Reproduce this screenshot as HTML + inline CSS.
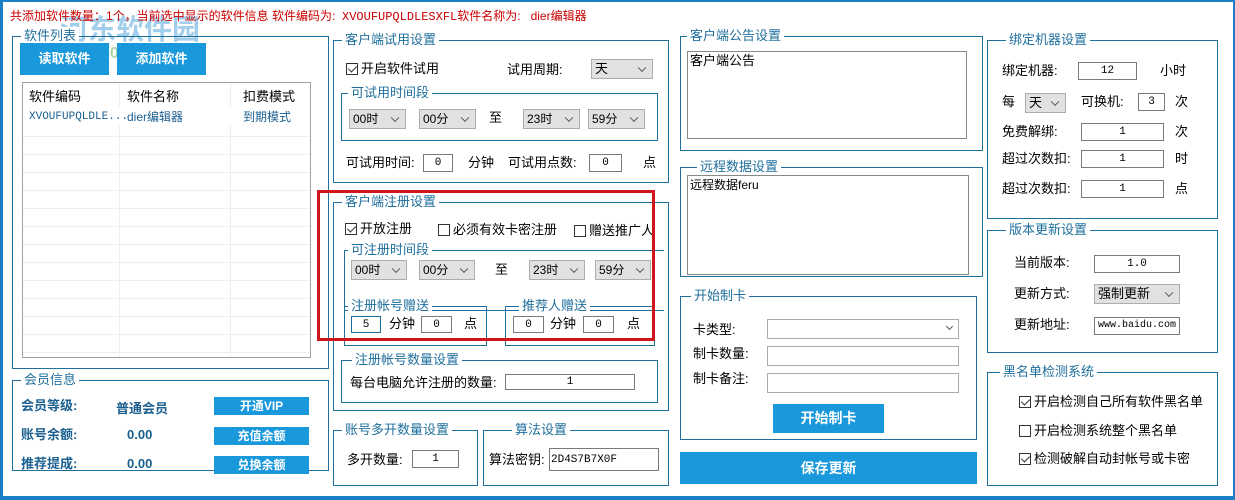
<!DOCTYPE html>
<html><head><meta charset="utf-8"><style>
*{box-sizing:border-box;margin:0;padding:0}
body{width:1235px;height:500px;background:#fff;position:relative;overflow:hidden;font-family:"Liberation Sans","Noto Sans CJK SC",sans-serif;font-size:12px;color:#000}
.frame{position:absolute;left:0;top:0;width:1235px;height:500px;border:2px solid #1a7fc4;border-left-width:3px;border-bottom-width:4px}
.a{position:absolute;white-space:nowrap;line-height:16px}
.g{position:absolute;border:1px solid #1f6f9c}
.lg{position:absolute;top:-10px;background:#fff;color:#1f6f9c;padding:0 3px;font-size:13px;line-height:18px;white-space:nowrap}
.in{position:absolute;border:1px solid #7a7a7a;background:#fff;display:flex;align-items:center;justify-content:center;font-family:"Liberation Mono","Noto Sans CJK SC",monospace;font-size:11px;line-height:12px!important}
.sel{position:absolute;background:#e1e1e1;border:1px solid #adadad;padding-left:3px;font-size:12px}
.sel:after{content:"";position:absolute;right:7px;top:50%;width:5px;height:5px;border-right:1px solid #555;border-bottom:1px solid #555;transform:translateY(-70%) rotate(45deg)}
.btn{position:absolute;background:#1a98dc;color:#fff;font-weight:bold;text-align:center;font-size:13px}
.cb{display:inline-block;width:12px;height:12px;border:1px solid #333;vertical-align:-2px;margin-right:3px;position:relative;background:#fff}
.cb.c:after{content:"";position:absolute;left:3px;top:0px;width:4px;height:7px;border-right:1.5px solid #333;border-bottom:1.5px solid #333;transform:rotate(45deg)}
.b{font-weight:bold;color:#1a5f8f}
</style></head><body>
<div class="frame"></div>
<div class="a" style="left:60px;top:14px;color:#4a9fd8;opacity:.5;font-size:28px;line-height:32px;font-weight:bold">河东软件园</div>
<div class="a" style="left:50px;top:46px;color:#4aa04a;opacity:.45;font-size:16px;font-weight:bold">www.pc0359.cn</div>
<div class="a" style="left:10px;top:8px;color:#c00;font-size:12px">共添加软件数量：1个，当前选中显示的软件信息 软件编码为:&nbsp;&nbsp;<span style="font-family:'Liberation Mono',monospace">XVOUFUPQLDLESXFL</span>软件名称为:&nbsp;&nbsp; dier编辑器</div>

<!-- 软件列表 -->
<div class="g" style="left:12px;top:36px;width:317px;height:333px"><div class="lg" style="left:8px">软件列表</div></div>
<div class="btn" style="left:20px;top:43px;width:89px;height:32px;line-height:32px">读取软件</div>
<div class="btn" style="left:117px;top:43px;width:89px;height:32px;line-height:32px">添加软件</div>
<div class="a" style="left:22px;top:82px;width:289px;height:276px;border:1px solid #a0a0a0;background:repeating-linear-gradient(#fff 0 17px,#eee 17px 18px)">
 <div style="position:absolute;left:0;top:0;width:287px;height:24px;background:#fff"></div>
 <div style="position:absolute;left:96px;top:0;height:274px;border-left:1px solid #eee"></div>
 <div style="position:absolute;left:207px;top:0;height:274px;border-left:1px solid #eee"></div>
 <div class="a" style="left:6px;top:6px;font-size:13px">软件编码</div>
 <div class="a" style="left:104px;top:6px;font-size:13px">软件名称</div>
 <div class="a" style="left:220px;top:6px;font-size:13px">扣费模式</div>
 <div style="position:absolute;left:0;top:24px;width:287px;height:18px;background:#fff"></div>
 <div class="a" style="left:6px;top:26px;color:#1a5f8f;font-family:'Liberation Mono',monospace;font-size:11px">XVOUFUPQLDLE...</div>
 <div class="a" style="left:104px;top:26px;color:#1a5f8f">dier编辑器</div>
 <div class="a" style="left:220px;top:26px;color:#1a5f8f">到期模式</div>
</div>

<!-- 会员信息 -->
<div class="g" style="left:12px;top:380px;width:317px;height:91px"><div class="lg" style="left:8px">会员信息</div></div>
<div class="a b" style="left:21px;top:398px;font-size:13px">会员等级:</div>
<div class="a b" style="left:116px;top:401px;font-size:13px">普通会员</div>
<div class="a b" style="left:21px;top:427px;font-size:13px">账号余额:</div>
<div class="a b" style="left:127px;top:427px;font-size:13px">0.00</div>
<div class="a b" style="left:21px;top:456px;font-size:13px">推荐提成:</div>
<div class="a b" style="left:127px;top:456px;font-size:13px">0.00</div>
<div class="btn" style="left:214px;top:397px;width:95px;height:18px;line-height:18px;font-size:12px">开通VIP</div>
<div class="btn" style="left:214px;top:427px;width:95px;height:18px;line-height:18px;font-size:12px">充值余额</div>
<div class="btn" style="left:214px;top:456px;width:95px;height:18px;line-height:18px;font-size:12px">兑换余额</div>

<!-- 客户端试用设置 -->
<div class="g" style="left:333px;top:40px;width:336px;height:143px"><div class="lg" style="left:8px">客户端试用设置</div></div>
<div class="a" style="left:346px;top:61px;font-size:13px"><span class="cb c"></span>开启软件试用</div>
<div class="a" style="left:507px;top:62px;font-size:13px">试用周期:</div>
<div class="sel" style="left:591px;top:59px;width:62px;height:20px;line-height:18px;font-size:13px">天</div>
<div class="g" style="left:341px;top:93px;width:317px;height:48px"><div class="lg" style="left:6px">可试用时间段</div></div>
<div class="sel" style="left:349px;top:109px;width:57px;height:20px;line-height:18px">00时</div>
<div class="sel" style="left:419px;top:109px;width:57px;height:20px;line-height:18px">00分</div>
<div class="a" style="left:489px;top:110px;font-size:13px">至</div>
<div class="sel" style="left:523px;top:109px;width:57px;height:20px;line-height:18px">23时</div>
<div class="sel" style="left:588px;top:109px;width:57px;height:20px;line-height:18px">59分</div>
<div class="a" style="left:346px;top:155px;font-size:13px">可试用时间:</div>
<div class="in" style="left:423px;top:154px;width:30px;height:18px">0</div>
<div class="a" style="left:468px;top:155px;font-size:13px">分钟</div>
<div class="a" style="left:508px;top:155px;font-size:13px">可试用点数:</div>
<div class="in" style="left:589px;top:154px;width:33px;height:18px">0</div>
<div class="a" style="left:643px;top:155px;font-size:13px">点</div>

<!-- 客户端注册设置 -->
<div class="g" style="left:333px;top:202px;width:336px;height:209px"><div class="lg" style="left:8px">客户端注册设置</div></div>
<div class="a" style="left:345px;top:221px;font-size:13px"><span class="cb c"></span>开放注册</div>
<div class="a" style="left:438px;top:222px;font-size:13px"><span class="cb"></span>必须有效卡密注册</div>
<div class="a" style="left:574px;top:223px;font-size:13px"><span class="cb"></span>赠送推广人</div>
<div class="g" style="left:344px;top:250px;width:320px;height:61px;border-right:none"><div class="lg" style="left:3px">可注册时间段</div></div>
<div class="sel" style="left:351px;top:260px;width:56px;height:20px;line-height:18px">00时</div>
<div class="sel" style="left:419px;top:260px;width:56px;height:20px;line-height:18px">00分</div>
<div class="a" style="left:495px;top:262px;font-size:13px">至</div>
<div class="sel" style="left:529px;top:260px;width:56px;height:20px;line-height:18px">23时</div>
<div class="sel" style="left:595px;top:260px;width:56px;height:20px;line-height:18px">59分</div>
<div class="g" style="left:344px;top:306px;width:143px;height:40px"><div class="lg" style="left:3px">注册帐号赠送</div></div>
<div class="in" style="left:351px;top:316px;width:30px;height:17px;border-color:#1f6f9c">5</div>
<div class="a" style="left:389px;top:316px;font-size:13px">分钟</div>
<div class="in" style="left:421px;top:316px;width:31px;height:17px">0</div>
<div class="a" style="left:464px;top:316px;font-size:13px">点</div>
<div class="g" style="left:505px;top:306px;width:150px;height:40px"><div class="lg" style="left:13px">推荐人赠送</div></div>
<div class="in" style="left:513px;top:316px;width:31px;height:17px">0</div>
<div class="a" style="left:550px;top:316px;font-size:13px">分钟</div>
<div class="in" style="left:583px;top:316px;width:31px;height:17px">0</div>
<div class="a" style="left:627px;top:316px;font-size:13px">点</div>
<div class="a" style="left:317px;top:190px;width:338px;height:151px;border:3px solid #d0161c"></div>
<div class="g" style="left:341px;top:360px;width:317px;height:43px"><div class="lg" style="left:10px">注册帐号数量设置</div></div>
<div class="a" style="left:350px;top:375px;font-size:13px">每台电脑允许注册的数量:</div>
<div class="in" style="left:505px;top:374px;width:130px;height:16px">1</div>

<!-- 账号多开 / 算法 -->
<div class="g" style="left:333px;top:430px;width:145px;height:56px"><div class="lg" style="left:8px">账号多开数量设置</div></div>
<div class="a" style="left:347px;top:452px;font-size:13px">多开数量:</div>
<div class="in" style="left:412px;top:450px;width:47px;height:18px">1</div>
<div class="g" style="left:483px;top:430px;width:186px;height:56px"><div class="lg" style="left:28px">算法设置</div></div>
<div class="a" style="left:489px;top:452px;font-size:13px">算法密钥:</div>
<div class="in" style="left:549px;top:448px;width:110px;height:23px;justify-content:flex-start;padding-left:1px">2D4S7B7X0F</div>

<!-- 公告 -->
<div class="g" style="left:680px;top:36px;width:303px;height:115px"><div class="lg" style="left:6px">客户端公告设置</div></div>
<div class="a" style="left:687px;top:51px;width:280px;height:88px;border:1px solid #888;padding:1px 2px;font-size:13px">客户端公告</div>
<div class="g" style="left:680px;top:167px;width:303px;height:110px"><div class="lg" style="left:16px">远程数据设置</div></div>
<div class="a" style="left:687px;top:175px;width:282px;height:100px;border:1px solid #888;padding:1px 2px;font-size:12px">远程数据feru</div>

<div class="g" style="left:680px;top:296px;width:297px;height:144px"><div class="lg" style="left:10px">开始制卡</div></div>
<div class="a" style="left:693px;top:322px;font-size:13px">卡类型:</div>
<div class="a" style="left:767px;top:319px;width:192px;height:20px;border:1px solid #aaa"><div style="position:absolute;right:6px;top:4px;width:5px;height:5px;border-right:1px solid #555;border-bottom:1px solid #555;transform:rotate(45deg)"></div></div>
<div class="a" style="left:693px;top:346px;font-size:13px">制卡数量:</div>
<div class="a" style="left:767px;top:346px;width:192px;height:20px;border:1px solid #aaa"></div>
<div class="a" style="left:693px;top:371px;font-size:13px">制卡备注:</div>
<div class="a" style="left:767px;top:373px;width:192px;height:20px;border:1px solid #aaa"></div>
<div class="btn" style="left:773px;top:404px;width:111px;height:29px;line-height:29px;font-size:14px">开始制卡</div>
<div class="btn" style="left:680px;top:452px;width:297px;height:32px;line-height:32px;font-size:14px">保存更新</div>

<!-- 绑定机器 -->
<div class="g" style="left:987px;top:40px;width:231px;height:179px"><div class="lg" style="left:18px">绑定机器设置</div></div>
<div class="a" style="left:1002px;top:63px;font-size:13px">绑定机器:</div>
<div class="in" style="left:1078px;top:62px;width:59px;height:18px">12</div>
<div class="a" style="left:1160px;top:63px;font-size:13px">小时</div>
<div class="a" style="left:1002px;top:94px;font-size:13px">每</div>
<div class="sel" style="left:1025px;top:93px;width:41px;height:20px;line-height:18px;font-size:13px">天</div>
<div class="a" style="left:1081px;top:94px;font-size:13px">可换机:</div>
<div class="in" style="left:1138px;top:93px;width:27px;height:18px">3</div>
<div class="a" style="left:1175px;top:94px;font-size:13px">次</div>
<div class="a" style="left:1002px;top:124px;font-size:13px">免费解绑:</div>
<div class="in" style="left:1081px;top:123px;width:83px;height:18px">1</div>
<div class="a" style="left:1175px;top:124px;font-size:13px">次</div>
<div class="a" style="left:1002px;top:151px;font-size:13px">超过次数扣:</div>
<div class="in" style="left:1081px;top:150px;width:83px;height:18px">1</div>
<div class="a" style="left:1175px;top:151px;font-size:13px">时</div>
<div class="a" style="left:1002px;top:181px;font-size:13px">超过次数扣:</div>
<div class="in" style="left:1081px;top:180px;width:83px;height:18px">1</div>
<div class="a" style="left:1175px;top:181px;font-size:13px">点</div>

<!-- 版本更新 -->
<div class="g" style="left:987px;top:230px;width:231px;height:123px"><div class="lg" style="left:18px">版本更新设置</div></div>
<div class="a" style="left:1014px;top:255px;font-size:13px">当前版本:</div>
<div class="in" style="left:1094px;top:255px;width:86px;height:18px">1.0</div>
<div class="a" style="left:1014px;top:286px;font-size:13px">更新方式:</div>
<div class="sel" style="left:1094px;top:284px;width:86px;height:20px;line-height:18px;font-size:13px">强制更新</div>
<div class="a" style="left:1014px;top:317px;font-size:13px">更新地址:</div>
<div class="in" style="left:1094px;top:317px;width:86px;height:18px;font-size:10px">www.baidu.com</div>

<!-- 黑名单 -->
<div class="g" style="left:987px;top:372px;width:231px;height:114px"><div class="lg" style="left:12px">黑名单检测系统</div></div>
<div class="a" style="left:1019px;top:394px;font-size:13px"><span class="cb c"></span>开启检测自己所有软件黑名单</div>
<div class="a" style="left:1019px;top:423px;font-size:13px"><span class="cb"></span>开启检测系统整个黑名单</div>
<div class="a" style="left:1019px;top:451px;font-size:13px"><span class="cb c"></span>检测破解自动封帐号或卡密</div>
</body></html>
